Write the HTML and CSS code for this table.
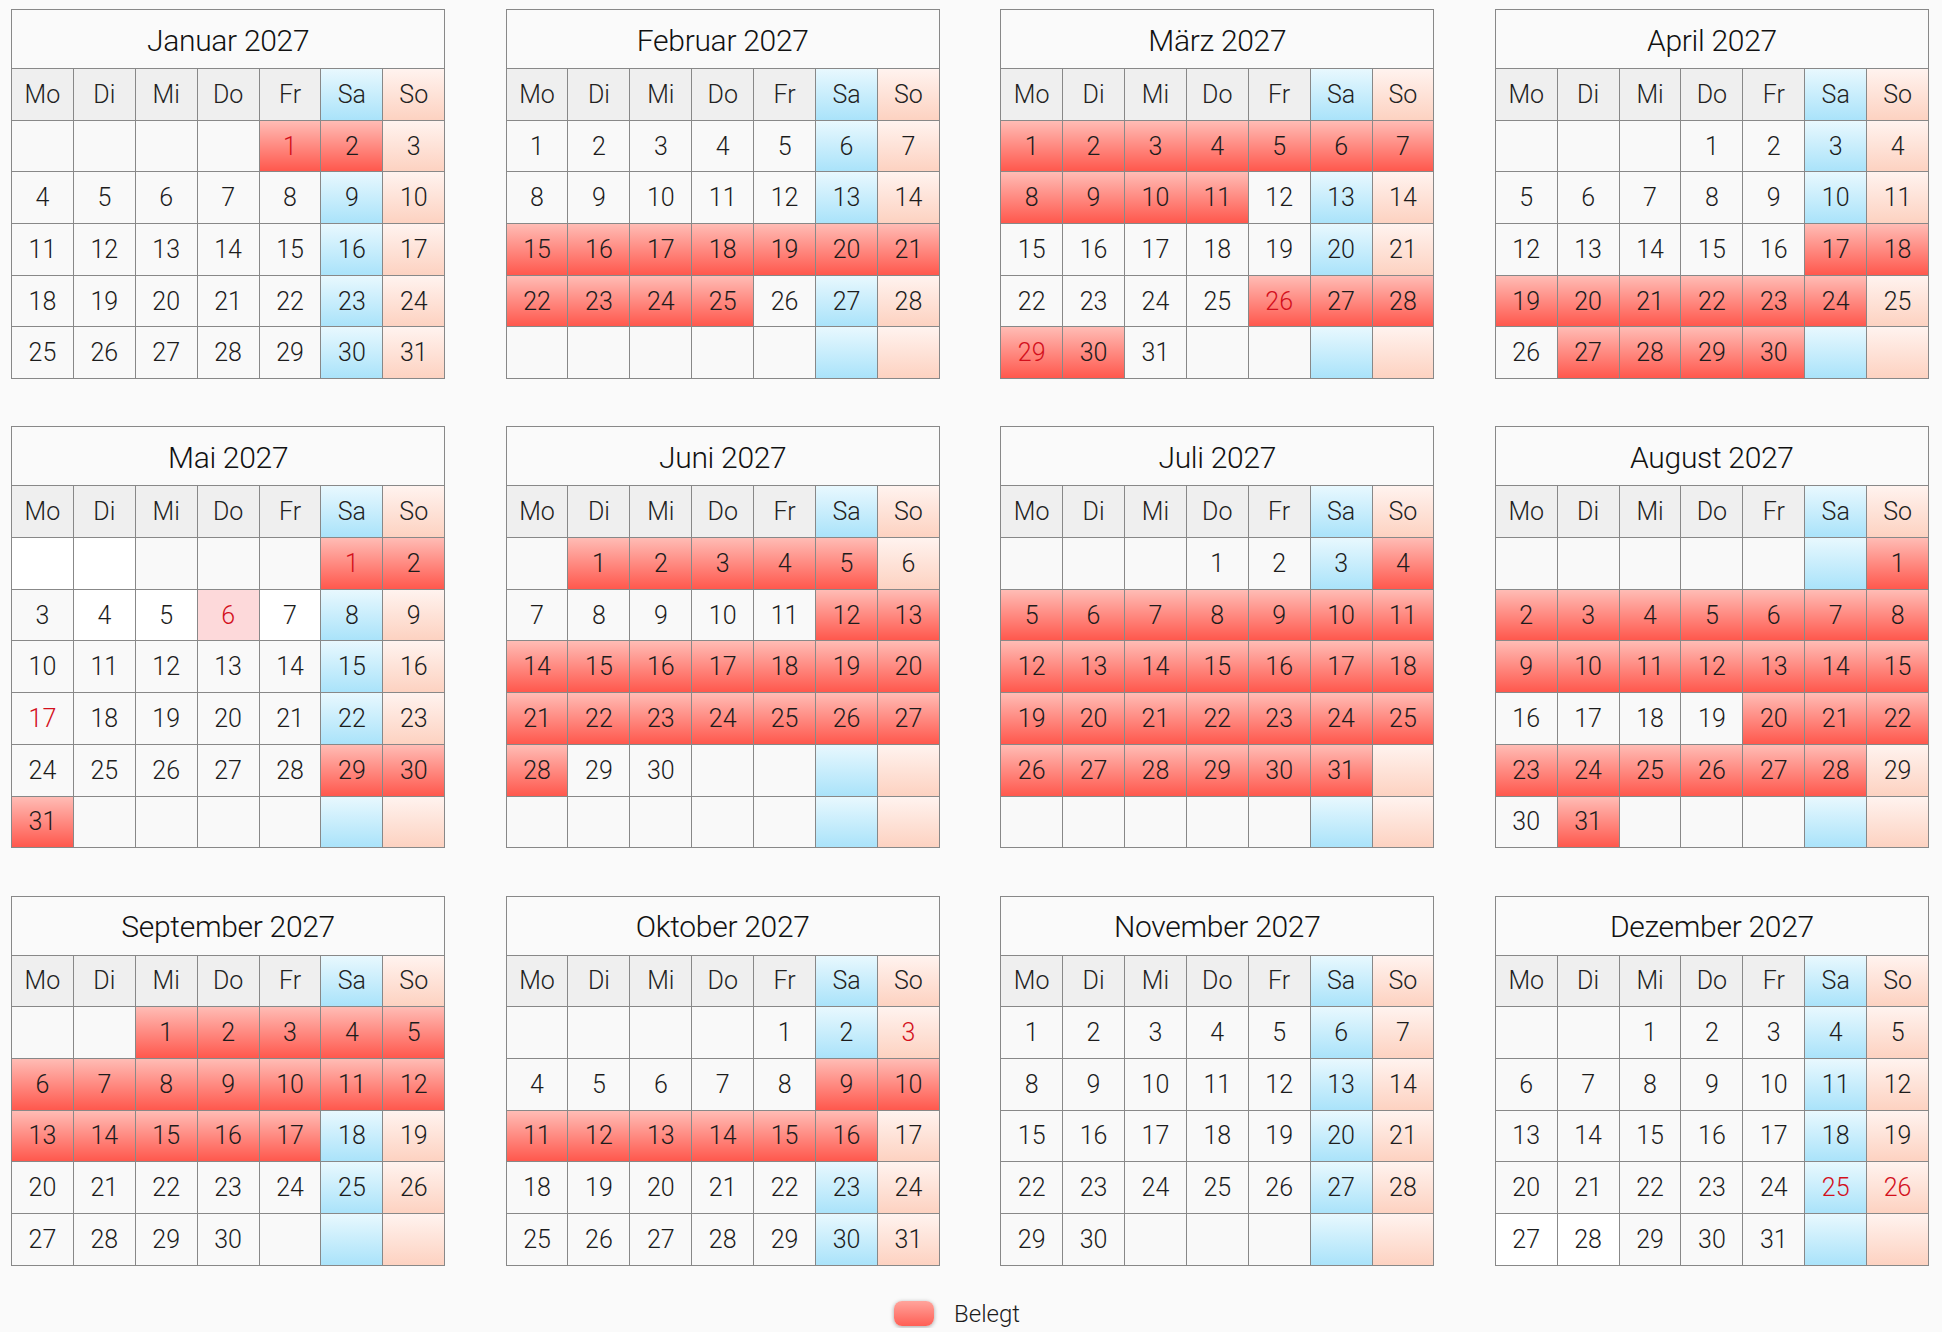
FILE: index.html
```html
<!DOCTYPE html>
<html lang="de">
<head>
<meta charset="utf-8">
<title>Belegungskalender 2027</title>
<link rel="stylesheet" href="styles.css">
</head>
<body>
<div class="year">

<div class="cal">
<div class="title">Januar 2027</div>
<div class="c hd">Mo</div><div class="c hd">Di</div><div class="c hd">Mi</div><div class="c hd">Do</div><div class="c hd">Fr</div><div class="c hd">Sa</div><div class="c hd">So</div>
<div class="c"></div><div class="c"></div><div class="c"></div><div class="c"></div><div class="c b h">1</div><div class="c b">2</div><div class="c">3</div>
<div class="c">4</div><div class="c">5</div><div class="c">6</div><div class="c">7</div><div class="c">8</div><div class="c">9</div><div class="c">10</div>
<div class="c">11</div><div class="c">12</div><div class="c">13</div><div class="c">14</div><div class="c">15</div><div class="c">16</div><div class="c">17</div>
<div class="c">18</div><div class="c">19</div><div class="c">20</div><div class="c">21</div><div class="c">22</div><div class="c">23</div><div class="c">24</div>
<div class="c">25</div><div class="c">26</div><div class="c">27</div><div class="c">28</div><div class="c">29</div><div class="c">30</div><div class="c">31</div>
</div>

<div class="cal">
<div class="title">Februar 2027</div>
<div class="c hd">Mo</div><div class="c hd">Di</div><div class="c hd">Mi</div><div class="c hd">Do</div><div class="c hd">Fr</div><div class="c hd">Sa</div><div class="c hd">So</div>
<div class="c">1</div><div class="c">2</div><div class="c">3</div><div class="c">4</div><div class="c">5</div><div class="c">6</div><div class="c">7</div>
<div class="c">8</div><div class="c">9</div><div class="c">10</div><div class="c">11</div><div class="c">12</div><div class="c">13</div><div class="c">14</div>
<div class="c b">15</div><div class="c b">16</div><div class="c b">17</div><div class="c b">18</div><div class="c b">19</div><div class="c b">20</div><div class="c b">21</div>
<div class="c b">22</div><div class="c b">23</div><div class="c b">24</div><div class="c b">25</div><div class="c">26</div><div class="c">27</div><div class="c">28</div>
<div class="c"></div><div class="c"></div><div class="c"></div><div class="c"></div><div class="c"></div><div class="c"></div><div class="c"></div>
</div>

<div class="cal">
<div class="title">März 2027</div>
<div class="c hd">Mo</div><div class="c hd">Di</div><div class="c hd">Mi</div><div class="c hd">Do</div><div class="c hd">Fr</div><div class="c hd">Sa</div><div class="c hd">So</div>
<div class="c b">1</div><div class="c b">2</div><div class="c b">3</div><div class="c b">4</div><div class="c b">5</div><div class="c b">6</div><div class="c b">7</div>
<div class="c b">8</div><div class="c b">9</div><div class="c b">10</div><div class="c b">11</div><div class="c">12</div><div class="c">13</div><div class="c">14</div>
<div class="c">15</div><div class="c">16</div><div class="c">17</div><div class="c">18</div><div class="c">19</div><div class="c">20</div><div class="c">21</div>
<div class="c">22</div><div class="c">23</div><div class="c">24</div><div class="c">25</div><div class="c b h">26</div><div class="c b">27</div><div class="c b">28</div>
<div class="c b h">29</div><div class="c b">30</div><div class="c">31</div><div class="c"></div><div class="c"></div><div class="c"></div><div class="c"></div>
</div>

<div class="cal">
<div class="title">April 2027</div>
<div class="c hd">Mo</div><div class="c hd">Di</div><div class="c hd">Mi</div><div class="c hd">Do</div><div class="c hd">Fr</div><div class="c hd">Sa</div><div class="c hd">So</div>
<div class="c"></div><div class="c"></div><div class="c"></div><div class="c">1</div><div class="c">2</div><div class="c">3</div><div class="c">4</div>
<div class="c">5</div><div class="c">6</div><div class="c">7</div><div class="c">8</div><div class="c">9</div><div class="c">10</div><div class="c">11</div>
<div class="c">12</div><div class="c">13</div><div class="c">14</div><div class="c">15</div><div class="c">16</div><div class="c b">17</div><div class="c b">18</div>
<div class="c b">19</div><div class="c b">20</div><div class="c b">21</div><div class="c b">22</div><div class="c b">23</div><div class="c b">24</div><div class="c">25</div>
<div class="c">26</div><div class="c b">27</div><div class="c b">28</div><div class="c b">29</div><div class="c b">30</div><div class="c"></div><div class="c"></div>
</div>

<div class="cal">
<div class="title">Mai 2027</div>
<div class="c hd">Mo</div><div class="c hd">Di</div><div class="c hd">Mi</div><div class="c hd">Do</div><div class="c hd">Fr</div><div class="c hd">Sa</div><div class="c hd">So</div>
<div class="c w"></div><div class="c w"></div><div class="c"></div><div class="c"></div><div class="c"></div><div class="c b h">1</div><div class="c b">2</div>
<div class="c">3</div><div class="c w">4</div><div class="c w">5</div><div class="c t h">6</div><div class="c w">7</div><div class="c">8</div><div class="c">9</div>
<div class="c">10</div><div class="c">11</div><div class="c">12</div><div class="c">13</div><div class="c">14</div><div class="c">15</div><div class="c">16</div>
<div class="c h">17</div><div class="c">18</div><div class="c">19</div><div class="c">20</div><div class="c">21</div><div class="c">22</div><div class="c">23</div>
<div class="c">24</div><div class="c">25</div><div class="c">26</div><div class="c">27</div><div class="c">28</div><div class="c b">29</div><div class="c b">30</div>
<div class="c b">31</div><div class="c"></div><div class="c"></div><div class="c"></div><div class="c"></div><div class="c"></div><div class="c"></div>
</div>

<div class="cal">
<div class="title">Juni 2027</div>
<div class="c hd">Mo</div><div class="c hd">Di</div><div class="c hd">Mi</div><div class="c hd">Do</div><div class="c hd">Fr</div><div class="c hd">Sa</div><div class="c hd">So</div>
<div class="c"></div><div class="c b">1</div><div class="c b">2</div><div class="c b">3</div><div class="c b">4</div><div class="c b">5</div><div class="c">6</div>
<div class="c">7</div><div class="c">8</div><div class="c">9</div><div class="c">10</div><div class="c">11</div><div class="c b">12</div><div class="c b">13</div>
<div class="c b">14</div><div class="c b">15</div><div class="c b">16</div><div class="c b">17</div><div class="c b">18</div><div class="c b">19</div><div class="c b">20</div>
<div class="c b">21</div><div class="c b">22</div><div class="c b">23</div><div class="c b">24</div><div class="c b">25</div><div class="c b">26</div><div class="c b">27</div>
<div class="c b">28</div><div class="c">29</div><div class="c">30</div><div class="c"></div><div class="c"></div><div class="c"></div><div class="c"></div>
<div class="c"></div><div class="c"></div><div class="c"></div><div class="c"></div><div class="c"></div><div class="c"></div><div class="c"></div>
</div>

<div class="cal">
<div class="title">Juli 2027</div>
<div class="c hd">Mo</div><div class="c hd">Di</div><div class="c hd">Mi</div><div class="c hd">Do</div><div class="c hd">Fr</div><div class="c hd">Sa</div><div class="c hd">So</div>
<div class="c"></div><div class="c"></div><div class="c"></div><div class="c">1</div><div class="c">2</div><div class="c">3</div><div class="c b">4</div>
<div class="c b">5</div><div class="c b">6</div><div class="c b">7</div><div class="c b">8</div><div class="c b">9</div><div class="c b">10</div><div class="c b">11</div>
<div class="c b">12</div><div class="c b">13</div><div class="c b">14</div><div class="c b">15</div><div class="c b">16</div><div class="c b">17</div><div class="c b">18</div>
<div class="c b">19</div><div class="c b">20</div><div class="c b">21</div><div class="c b">22</div><div class="c b">23</div><div class="c b">24</div><div class="c b">25</div>
<div class="c b">26</div><div class="c b">27</div><div class="c b">28</div><div class="c b">29</div><div class="c b">30</div><div class="c b">31</div><div class="c"></div>
<div class="c"></div><div class="c"></div><div class="c"></div><div class="c"></div><div class="c"></div><div class="c"></div><div class="c"></div>
</div>

<div class="cal">
<div class="title">August 2027</div>
<div class="c hd">Mo</div><div class="c hd">Di</div><div class="c hd">Mi</div><div class="c hd">Do</div><div class="c hd">Fr</div><div class="c hd">Sa</div><div class="c hd">So</div>
<div class="c"></div><div class="c"></div><div class="c"></div><div class="c"></div><div class="c"></div><div class="c"></div><div class="c b">1</div>
<div class="c b">2</div><div class="c b">3</div><div class="c b">4</div><div class="c b">5</div><div class="c b">6</div><div class="c b">7</div><div class="c b">8</div>
<div class="c b">9</div><div class="c b">10</div><div class="c b">11</div><div class="c b">12</div><div class="c b">13</div><div class="c b">14</div><div class="c b">15</div>
<div class="c">16</div><div class="c">17</div><div class="c">18</div><div class="c">19</div><div class="c b">20</div><div class="c b">21</div><div class="c b">22</div>
<div class="c b">23</div><div class="c b">24</div><div class="c b">25</div><div class="c b">26</div><div class="c b">27</div><div class="c b">28</div><div class="c">29</div>
<div class="c">30</div><div class="c b">31</div><div class="c"></div><div class="c"></div><div class="c"></div><div class="c"></div><div class="c"></div>
</div>

<div class="cal">
<div class="title">September 2027</div>
<div class="c hd">Mo</div><div class="c hd">Di</div><div class="c hd">Mi</div><div class="c hd">Do</div><div class="c hd">Fr</div><div class="c hd">Sa</div><div class="c hd">So</div>
<div class="c"></div><div class="c"></div><div class="c b">1</div><div class="c b">2</div><div class="c b">3</div><div class="c b">4</div><div class="c b">5</div>
<div class="c b">6</div><div class="c b">7</div><div class="c b">8</div><div class="c b">9</div><div class="c b">10</div><div class="c b">11</div><div class="c b">12</div>
<div class="c b">13</div><div class="c b">14</div><div class="c b">15</div><div class="c b">16</div><div class="c b">17</div><div class="c">18</div><div class="c">19</div>
<div class="c">20</div><div class="c">21</div><div class="c">22</div><div class="c">23</div><div class="c">24</div><div class="c">25</div><div class="c">26</div>
<div class="c">27</div><div class="c">28</div><div class="c">29</div><div class="c">30</div><div class="c"></div><div class="c"></div><div class="c"></div>
</div>

<div class="cal">
<div class="title">Oktober 2027</div>
<div class="c hd">Mo</div><div class="c hd">Di</div><div class="c hd">Mi</div><div class="c hd">Do</div><div class="c hd">Fr</div><div class="c hd">Sa</div><div class="c hd">So</div>
<div class="c"></div><div class="c"></div><div class="c"></div><div class="c"></div><div class="c">1</div><div class="c">2</div><div class="c h">3</div>
<div class="c">4</div><div class="c">5</div><div class="c">6</div><div class="c">7</div><div class="c">8</div><div class="c b">9</div><div class="c b">10</div>
<div class="c b">11</div><div class="c b">12</div><div class="c b">13</div><div class="c b">14</div><div class="c b">15</div><div class="c b">16</div><div class="c">17</div>
<div class="c">18</div><div class="c">19</div><div class="c">20</div><div class="c">21</div><div class="c">22</div><div class="c">23</div><div class="c">24</div>
<div class="c">25</div><div class="c">26</div><div class="c">27</div><div class="c">28</div><div class="c">29</div><div class="c">30</div><div class="c">31</div>
</div>

<div class="cal">
<div class="title">November 2027</div>
<div class="c hd">Mo</div><div class="c hd">Di</div><div class="c hd">Mi</div><div class="c hd">Do</div><div class="c hd">Fr</div><div class="c hd">Sa</div><div class="c hd">So</div>
<div class="c">1</div><div class="c">2</div><div class="c">3</div><div class="c">4</div><div class="c">5</div><div class="c">6</div><div class="c">7</div>
<div class="c">8</div><div class="c">9</div><div class="c">10</div><div class="c">11</div><div class="c">12</div><div class="c">13</div><div class="c">14</div>
<div class="c">15</div><div class="c">16</div><div class="c">17</div><div class="c">18</div><div class="c">19</div><div class="c">20</div><div class="c">21</div>
<div class="c">22</div><div class="c">23</div><div class="c">24</div><div class="c">25</div><div class="c">26</div><div class="c">27</div><div class="c">28</div>
<div class="c">29</div><div class="c">30</div><div class="c"></div><div class="c"></div><div class="c"></div><div class="c"></div><div class="c"></div>
</div>

<div class="cal">
<div class="title">Dezember 2027</div>
<div class="c hd">Mo</div><div class="c hd">Di</div><div class="c hd">Mi</div><div class="c hd">Do</div><div class="c hd">Fr</div><div class="c hd">Sa</div><div class="c hd">So</div>
<div class="c"></div><div class="c"></div><div class="c">1</div><div class="c">2</div><div class="c">3</div><div class="c">4</div><div class="c">5</div>
<div class="c">6</div><div class="c">7</div><div class="c">8</div><div class="c">9</div><div class="c">10</div><div class="c">11</div><div class="c">12</div>
<div class="c">13</div><div class="c">14</div><div class="c">15</div><div class="c">16</div><div class="c">17</div><div class="c">18</div><div class="c">19</div>
<div class="c">20</div><div class="c">21</div><div class="c">22</div><div class="c">23</div><div class="c">24</div><div class="c h">25</div><div class="c h">26</div>
<div class="c w">27</div><div class="c w">28</div><div class="c">29</div><div class="c">30</div><div class="c">31</div><div class="c"></div><div class="c"></div>
</div>

</div>

<div class="legend">
<div class="legend-item"><span class="swatch"></span><span class="legend-label">Belegt</span></div>
</div>
</body>
</html>
```

FILE: styles.css
```css
html, body {
  margin: 0;
  padding: 0;
  background: #fafafa;
}

body {
  font-family: Roboto, "Liberation Sans", Arial, sans-serif;
  font-weight: 300;
  color: #1c1c1c;
}

.year {
  display: grid;
  grid-template-columns: repeat(4, 434.3px);
  column-gap: 60.3px;
  row-gap: 47.3px;
  padding: 9px 0 0 11px;
  align-items: start;
}

.cal {
  display: grid;
  grid-template-columns: repeat(7, 61.9px);
  border-left: 1px solid #888;
  border-top: 1px solid #888;
}

.title {
  grid-column: 1 / -1;
  box-sizing: border-box;
  height: 59px;
  border-right: 1px solid #888;
  border-bottom: 1px solid #888;
  display: flex;
  align-items: center;
  justify-content: center;
  font-size: 30px;
  color: #111;
  background: #fafafa;
  padding-top: 2px;
  letter-spacing: -0.3px;
}

.c {
  box-sizing: border-box;
  height: 51.7px;
  border-right: 1px solid #888;
  border-bottom: 1px solid #888;
  display: flex;
  align-items: center;
  justify-content: center;
  font-size: 25px;
  background: #f9f9f9;
  color: #1c1c1c;
}

.cal > .hd {
  background: #efefef;
  color: #222;
}

.cal > .w {
  background: #ffffff;
}

/* Saturday column */
.cal > :nth-child(7n) {
  background: linear-gradient(to bottom, #e8f8fe 0%, #aae3fa 100%);
}

/* Sunday column */
.cal > :nth-child(7n+8) {
  background: linear-gradient(to bottom, #fff3ef 0%, #fdd2c1 100%);
}

/* booked */
.cal > .b {
  background: linear-gradient(to bottom, #ffbcb5 0%, #ff584d 100%);
}

/* highlighted day */
.cal > .t {
  background: #fdd9da;
}

/* holiday text */
.cal > .h {
  color: #d3101c;
}

.legend {
  display: flex;
  justify-content: center;
  padding-top: 34px;
  padding-right: 28px;
}

.legend-item {
  display: flex;
  align-items: center;
  gap: 20px;
}

.swatch {
  display: block;
  width: 40px;
  height: 25px;
  border-radius: 8px;
  background: linear-gradient(to bottom, #ffa49c 0%, #ff5f55 100%);
  box-shadow: 0 1px 4px rgba(0, 0, 0, 0.35);
}

.legend-label {
  font-size: 24px;
  color: #1c1c1c;
}
```
